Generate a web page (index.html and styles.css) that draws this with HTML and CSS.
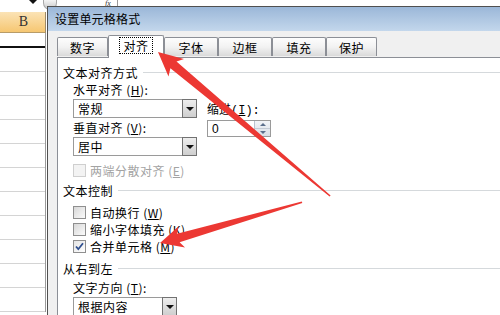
FILE: index.html
```html
<!DOCTYPE html>
<html lang="zh">
<head>
<meta charset="utf-8">
<link rel="stylesheet" href="styles.css">
</head>
<body>
<div class="screen">
  <div class="sheet">
    <div class="formula">
      <span class="dd"></span>
      <span class="fxbtn"></span>
      <span class="fx">fx</span>
      <span class="fxline"></span>
    </div>
    <div class="colhead"><span class="colb">B</span></div>
    <div class="rows">
      <div class="row sel"></div>
      <div class="row"></div>
      <div class="row"></div>
      <div class="row"></div>
      <div class="row"></div>
      <div class="row"></div>
      <div class="row"></div>
      <div class="row"></div>
      <div class="row"></div>
      <div class="row"></div>
      <div class="row"></div>
      <div class="row"></div>
    </div>
  </div>

  <div class="dialog">
    <div class="titlebar">设置单元格格式</div>
    <div class="tabs">
      <div class="tab t1">数字</div>
      <div class="tab active"><span class="focus">对齐</span></div>
      <div class="tab t3">字体</div>
      <div class="tab t4">边框</div>
      <div class="tab t5">填充</div>
      <div class="tab t6">保护</div>
    </div>
    <div class="page">
      <div class="group g1">文本对齐方式</div>
      <div class="cols">
        <div class="col-left">
          <div class="lbl">水平对齐 (<u>H</u>):</div>
          <div class="select wide"><span class="val">常规</span><span class="btn"><i></i></span></div>
          <div class="lbl l2">垂直对齐 (<u>V</u>):</div>
          <div class="select wide"><span class="val">居中</span><span class="btn"><i></i></span></div>
          <div class="check dis"><span class="box"></span><span>两端分散对齐 (<u>E</u>)</span></div>
        </div>
        <div class="col-right">
          <div class="lbl">缩进(<u>I</u>):</div>
          <div class="spin"><span class="val">0</span><span class="spinbtn"><b class="up"></b><b class="down"></b></span></div>
        </div>
      </div>
      <div class="group g2">文本控制</div>
      <div class="checks">
        <div class="check"><span class="box"></span><span>自动换行 (<u>W</u>)</span></div>
        <div class="check"><span class="box"></span><span>缩小字体填充 (<u>K</u>)</span></div>
        <div class="check"><span class="box on"><svg width="11" height="11" viewBox="0 0 11 11"><path d="M2 5.5 L4.3 8.2 L9 2.2" fill="none" stroke="#2f4f8f" stroke-width="1.8"/></svg></span><span>合并单元格 (<u>M</u>)</span></div>
      </div>
      <div class="group g3">从右到左</div>
      <div class="indent">
        <div class="lbl">文字方向 (<u>T</u>):</div>
        <div class="select narrow"><span class="val">根据内容</span><span class="btn"><i></i></span></div>
      </div>
    </div>
  </div>

  <svg class="arrows" width="500" height="315" viewBox="0 0 500 315">
    <polygon points="158,52 184,59 176.5,61.5 330.6,195.4 329.6,196.6 170.4,68.3 168.5,76.5" fill="#ec3833"/>
    <polygon points="160,243 178.5,226.5 177,233.7 301.8,201.4 302.3,203 179.6,242.3 185,247.5" fill="#ec3833"/>
  </svg>
</div>
</body>
</html>
```

FILE: styles.css
```css
* { box-sizing: border-box; }
html, body { margin: 0; padding: 0; }
body {
  background: #ffffff;
  font-family: "Noto Sans CJK SC", "Noto Sans", sans-serif;
  font-size: 12px;
  color: #000;
}
.screen {
  position: relative;
  width: 500px;
  height: 315px;
  overflow: hidden;
  background: #ffffff;
}

/* spreadsheet behind */
.sheet { width: 500px; height: 315px; }
.formula {
  height: 12px;
  display: flex;
  align-items: flex-start;
  background: #fff;
}
.dd {
  width: 0; height: 0;
  margin-left: 29px;
  border-left: 4px solid transparent;
  border-right: 4px solid transparent;
  border-top: 4px solid #111;
}
.fxbtn {
  width: 14px; height: 10px;
  margin-left: 6px;
  border-radius: 0 0 7px 7px;
  background: linear-gradient(#f4f4f4, #c9c9c9);
  border: 1px solid #a8a8a8;
  border-top: none;
}
.fx {
  margin-left: 48px;
  font-family: "Liberation Serif", serif;
  font-style: italic;
  font-size: 8px;
  line-height: 8px;
  color: #333;
}
.fxline {
  width: 1px; height: 8px;
  margin-left: 6px;
  background: #9a9a9a;
}
.colhead {
  width: 46px;
  height: 21px;
  background: linear-gradient(#fbe3b6, #f6c772);
  border-right: 1px solid #9c8a6a;
  border-bottom: 1px solid #b89c68;
  display: flex;
  align-items: center;
  justify-content: center;
}
.colb {
  font-family: "Liberation Serif", serif;
  font-size: 14px;
  color: #333;
  padding-left: 2px;
}
.rows { width: 46px; border-right: 1px solid #9a9a9a; }
.row {
  height: 24px;
  border-bottom: 1px solid #d4d4d4;
}
.row.sel {
  height: 15px;
  border-bottom: 2px solid #111;
}

/* dialog */
.dialog {
  position: absolute;
  left: 47px;
  top: 6px;
  width: 470px;
  height: 330px;
  background: #f0f0f0;
  border: 1px solid #505050;
  border-right: none;
  border-bottom: none;
}
.titlebar {
  height: 24px;
  background: linear-gradient(#9bb7d8, #c3d7ec);
  padding-left: 7px;
  font-size: 12px;
  letter-spacing: 0.2px;
  line-height: 24px;
  color: #000;
}
.tabs {
  display: flex;
  align-items: flex-end;
  height: 26px;
  margin-left: 9px;
}
.tab {
  height: 19px;
  width: 54px;
  border: 1px solid #8c8f96;
  border-bottom: none;
  border-radius: 2px 2px 0 0;
  background: linear-gradient(#fdfdfd 0%, #f2f2f2 50%, #dadada 100%);
  display: flex;
  align-items: center;
  justify-content: center;
  font-size: 12px;
  letter-spacing: 0.5px;
  margin-bottom: 1px;
}
.tab.t1 { width: 51px; }
.tab.t6 { width: 51px; }
.tab.active {
  width: 56px;
  height: 23px;
  background: #ffffff;
  position: relative;
  z-index: 2;
  margin-bottom: -1px;
  border-color: #8c8f96;
  padding-bottom: 3px;
}
.focus {
  border: 1px dotted #000;
  padding: 0 3px;
  line-height: 15px;
}
.page {
  margin-left: 9px;
  height: 260px;
  background: #ffffff;
  border-top: 1px solid #8c8f96;
  border-left: 1px solid #8c8f96;
  padding-left: 5px;
  position: relative;
  z-index: 1;
}
.group {
  height: 18px;
  display: flex;
  align-items: center;
  font-size: 12px;
  letter-spacing: 0.5px;
}
.group::after {
  content: "";
  flex: 1;
  height: 1px;
  margin-left: 5px;
  background: #d5d9dc;
}
.g1 { margin-top: 5px; }
.g2 { margin-top: 2px; }
.g3 { margin-top: 4px; }

.cols { display: flex; padding-left: 10px; }
.col-left { width: 124px; }
.col-right { margin-left: 10px; padding-top: 22px; }
.lbl {
  height: 18px;
  line-height: 18px;
  font-size: 12px;
  letter-spacing: 0.5px;
  white-space: nowrap;
}
.col-right .lbl { height: 17px; line-height: 17px; font-family: "Liberation Mono", "Noto Sans CJK SC", monospace; letter-spacing: 0; }
.lbl.l2 { margin-top: 1px; }
u { text-decoration: underline; text-underline-offset: 1px; }

.select {
  height: 19px;
  border: 1px solid #9a9a9a;
  background: #fff;
  display: flex;
  align-items: center;
  justify-content: space-between;
  padding: 0 0 0 4px;
  letter-spacing: 0.5px;
}
.select.wide { width: 124px; }
.select.narrow { width: 104px; }
.btn {
  width: 15px;
  height: 19px;
  margin-right: -1px;
  border: 1px solid #727272;
  background: linear-gradient(#eeeeee, #cfcfcf);
  display: flex;
  align-items: center;
  justify-content: center;
}
.btn i {
  width: 0; height: 0;
  border-left: 4px solid transparent;
  border-right: 4px solid transparent;
  border-top: 4px solid #111;
}
.spin {
  width: 64px;
  height: 17px;
  border: 1px solid #9a9a9a;
  display: flex;
  align-items: center;
  justify-content: space-between;
  padding-left: 4px;
  font-family: "Liberation Sans", sans-serif;
  font-size: 12px;
}
.spinbtn {
  width: 16px;
  height: 15px;
  display: flex;
  flex-direction: column;
  border-left: 1px solid #b9c3cf;
  background: linear-gradient(#f2f5f8, #d8dee6);
}
.spinbtn b {
  flex: 1;
  display: flex;
  align-items: center;
  justify-content: center;
}
.spinbtn b::before {
  content: "";
  width: 0; height: 0;
  border-left: 3px solid transparent;
  border-right: 3px solid transparent;
}
.spinbtn .up::before { border-bottom: 3px solid #5b6f8c; }
.spinbtn .down::before { border-top: 3px solid #5b6f8c; }
.spinbtn .up { border-bottom: 1px solid #c4ccd6; }

.check {
  height: 17px;
  display: flex;
  align-items: center;
  gap: 4px;
  font-size: 12px;
  letter-spacing: 0.5px;
  white-space: nowrap;
}
.box {
  width: 13px;
  height: 13px;
  border: 1px solid #8f8f8f;
  background: linear-gradient(135deg, #d8d8d8, #fbfbfb);
  display: flex;
  align-items: center;
  justify-content: center;
}
.box.on { background: linear-gradient(135deg, #e4e4e4, #ffffff); }
.check.dis { color: #a3a3a3; margin-top: 5px; height: 18px; }
.check.dis .box { border-color: #cfcfcf; background: #f3f3f3; }
.checks { padding-left: 10px; margin-top: 5px; }
.indent { padding-left: 10px; margin-top: 2px; }

.arrows {
  position: absolute;
  left: 0;
  top: 0;
  z-index: 5;
}
```
